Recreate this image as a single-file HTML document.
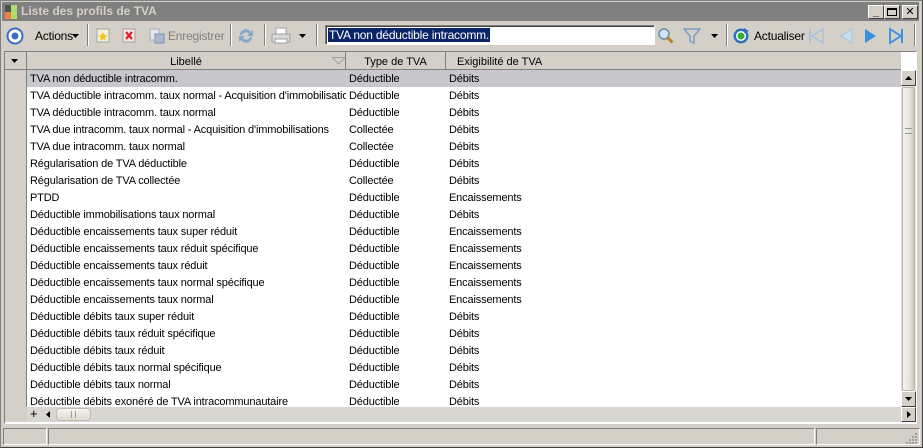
<!DOCTYPE html>
<html><head><meta charset="utf-8"><style>
*{box-sizing:border-box;margin:0;padding:0}
body{width:923px;height:448px;background:#d4d0c8;font-family:"Liberation Sans","DejaVu Sans",sans-serif;font-size:11px;color:#000;position:relative;overflow:hidden}
.abs{position:absolute}
#win{left:0;top:0;width:923px;height:448px;border:1px solid #808080;border-right-color:#404040;border-bottom-color:#404040;background:#d4d0c8}
#title{left:2px;top:2px;width:917px;height:19px;background:#808080;color:#d4d0c8;font-weight:bold;font-size:12px}
.tb{width:16px;height:14px;background:#d4d0c8;border:1px solid;border-color:#fff #404040 #404040 #fff;top:3px;font-size:11px;text-align:center;line-height:12px;font-weight:bold;color:#000}
.sep{width:2px;height:22px;border-left:1px solid #808080;border-right:1px solid #fff;top:24px}
.t{top:29px;font-size:12px;letter-spacing:-0.2px}
#grid{left:4px;top:51px;width:913px;height:373px;border:1px solid #808080;border-right-color:#fff;border-bottom-color:#fff;background:#fff}
.hdr{top:52px;height:18px;background:#d4d0c8;border-right:1px solid #808080;border-bottom:1px solid #808080;line-height:19px;font-size:11px;padding-top:1px}
.row{position:absolute;left:27px;width:874px;height:17px;line-height:18px;white-space:nowrap;overflow:hidden}
.row span{position:absolute;top:0;overflow:hidden;white-space:nowrap;letter-spacing:-0.15px}
.c1{left:3px;width:316px}.c2{left:322px}.c3{left:422px}
.btn{background:#d4d0c8;border:1px solid;border-color:#fff #404040 #404040 #fff}
.sb{top:428px;height:17px;border:1px solid;border-color:#808080 #fff #fff #808080}
</style></head><body>
<div id="win" class="abs"></div>
<div id="title" class="abs">
 <div class="abs" style="left:3px;top:3px;width:6px;height:14px;background:#505050"></div>
 <div class="abs" style="left:3px;top:10px;width:6px;height:7px;background:#f08040"></div>
 <div class="abs" style="left:9px;top:3px;width:6px;height:14px;background:#a8e070"></div>
 <div class="abs" style="left:19px;top:2px;line-height:15px">Liste des profils de TVA</div>
 <div class="abs tb" style="left:866px">_</div>
 <div class="abs tb" style="left:882px"><div style="margin:2px auto;width:10px;height:8px;border:1px solid #000;border-top-width:2px"></div></div>
 <div class="abs tb" style="left:900px;line-height:13px">✕</div>
</div>
<svg class="abs" style="left:6px;top:27px" width="18" height="18"><circle cx="9" cy="9" r="7.5" fill="#fff" stroke="#3a6fc8" stroke-width="2"/><circle cx="9" cy="9" r="3.5" fill="#3a6fc8"/></svg>
<div class="abs t" style="left:35px">Actions</div>
<svg class="abs" style="left:72px;top:34px" width="8" height="5"><path d="M0 0H7L3.5 4Z" fill="#000"/></svg>
<div class="abs sep" style="left:87px"></div>
<svg class="abs" style="left:96px;top:28px" width="14" height="15"><rect x="1" y="1" width="12" height="13" fill="#f4f0d8" stroke="#9aa"/><path d="M7 4l1.5 3 3 .5-2.3 2 .6 3L7 11l-2.8 1.5.6-3-2.3-2 3-.5z" fill="#f0c020"/></svg>
<svg class="abs" style="left:122px;top:28px" width="14" height="15"><rect x="1" y="1" width="12" height="13" fill="#f4e8e8" stroke="#a99"/><path d="M4 4l6 7M10 4l-6 7" stroke="#e02020" stroke-width="2.2"/></svg>
<svg class="abs" style="left:149px;top:28px" width="16" height="16"><rect x="1" y="1" width="9" height="11" fill="#e0e4ec" stroke="#a8b0c0"/><rect x="6" y="6" width="9" height="9" fill="#a8b8d0" stroke="#8090b0"/></svg>
<div class="abs t" style="left:168px;color:#808080">Enregistrer</div>
<div class="abs sep" style="left:230px"></div>
<svg class="abs" style="left:236px;top:26px" width="20" height="20"><path d="M4 9a6 6 0 0 1 11-3l2-2v6h-6l2-2a4 4 0 0 0-7 1z" fill="#80a8c8"/><path d="M16 11a6 6 0 0 1-11 3l-2 2v-6h6l-2 2a4 4 0 0 0 7-1z" fill="#80a8c8"/></svg>
<div class="abs sep" style="left:264px"></div>
<svg class="abs" style="left:271px;top:27px" width="20" height="18"><rect x="5" y="1" width="10" height="6" fill="#fff" stroke="#a0a0a0"/><rect x="1" y="7" width="18" height="8" rx="1" fill="#d8d8d8" stroke="#a0a0a0"/><rect x="4" y="12" width="12" height="4" fill="#fff" stroke="#a0a0a0"/></svg>
<svg class="abs" style="left:299px;top:34px" width="8" height="5"><path d="M0 0H7L3.5 4Z" fill="#000"/></svg>
<div class="abs sep" style="left:316px"></div>
<div class="abs" style="left:325px;top:25px;width:330px;height:20px;background:#fff;border:1px solid;border-color:#808080 #fff #fff #808080;box-shadow:inset 1px 1px 0 #404040"></div>
<div class="abs" style="left:328px;top:28px;height:14px;background:#0a246a;color:#fff;font-size:12px;line-height:14px;padding:0 1px;letter-spacing:-0.2px">TVA non déductible intracomm.</div>
<svg class="abs" style="left:656px;top:26px" width="20" height="20"><circle cx="8" cy="8" r="5" fill="#cfe4f8" stroke="#6a8aa8" stroke-width="1.5"/><path d="M11.5 11.5l5 5" stroke="#c08020" stroke-width="3"/></svg>
<svg class="abs" style="left:683px;top:27px" width="18" height="18"><path d="M1 2h16l-6 7v7l-4-2v-5z" fill="none" stroke="#7aa0c8" stroke-width="1.5"/></svg>
<svg class="abs" style="left:711px;top:34px" width="8" height="5"><path d="M0 0H7L3.5 4Z" fill="#000"/></svg>
<div class="abs sep" style="left:726px"></div>
<svg class="abs" style="left:732px;top:27px" width="18" height="18"><circle cx="9" cy="9" r="7.5" fill="#3070c0"/><circle cx="9" cy="9" r="5" fill="#fff"/><circle cx="9" cy="9" r="3.5" fill="#30b030"/><path d="M12 1l5 3-5 2z" fill="#3070c0"/></svg>
<div class="abs t" style="left:754px">Actualiser</div>
<svg class="abs" style="left:808px;top:27px" width="110" height="18"><path d="M2 2v14" stroke="#a8c4e0" stroke-width="2"/><path d="M15 2v14L4 9z" fill="none" stroke="#a8c4e0" stroke-width="1.5"/><path d="M44 2v14L33 9z" fill="#c8dcf0" stroke="#a8c4e0"/><path d="M57 2v14l11-7z" fill="#3a90e0"/><path d="M82 2v14l11-7z" fill="none" stroke="#3a90e0" stroke-width="1.8"/><path d="M94 2v14" stroke="#3a90e0" stroke-width="2"/></svg>
<div class="abs sep" style="left:914px"></div>
<div id="grid" class="abs"></div>
<div class="abs hdr" style="left:5px;width:22px;"><svg style="position:absolute;left:6px;top:7px" width="8" height="5"><path d="M0 0H7L3.5 4Z" fill="#000"/></svg></div>
<div class="abs" style="left:5px;top:70px;width:22px;height:337px;background:#d4d0c8;border-right:1px solid #808080"></div>
<div class="abs hdr" style="left:27px;width:319px;text-align:center">Libellé<svg style="position:absolute;left:305px;top:5px" width="14" height="8"><path d="M0.5 0.5H13L6.7 7Z" fill="none" stroke="#a0a0a0"/></svg></div>
<div class="abs hdr" style="left:346px;width:100px;text-align:center">Type de TVA</div>
<div class="abs hdr" style="left:446px;width:455px;padding-left:11px;border-right:none">Exigibilité de TVA</div>
<div class="abs" style="left:27px;top:70px;width:874px;height:17px;background:#c8c8cc"></div>
<div class="abs" style="left:27px;top:70px;width:874px;height:337px;">
<div class="row" style="left:0;top:0"><span class="c1">TVA non déductible intracomm.</span><span class="c2">Déductible</span><span class="c3">Débits</span></div>
<div class="row" style="left:0;top:17px"><span class="c1">TVA déductible intracomm. taux normal - Acquisition d'immobilisations</span><span class="c2">Déductible</span><span class="c3">Débits</span></div>
<div class="row" style="left:0;top:34px"><span class="c1">TVA déductible intracomm. taux normal</span><span class="c2">Déductible</span><span class="c3">Débits</span></div>
<div class="row" style="left:0;top:51px"><span class="c1">TVA due intracomm. taux normal - Acquisition d'immobilisations</span><span class="c2">Collectée</span><span class="c3">Débits</span></div>
<div class="row" style="left:0;top:68px"><span class="c1">TVA due intracomm. taux normal</span><span class="c2">Collectée</span><span class="c3">Débits</span></div>
<div class="row" style="left:0;top:85px"><span class="c1">Régularisation de TVA déductible</span><span class="c2">Déductible</span><span class="c3">Débits</span></div>
<div class="row" style="left:0;top:102px"><span class="c1">Régularisation de TVA collectée</span><span class="c2">Collectée</span><span class="c3">Débits</span></div>
<div class="row" style="left:0;top:119px"><span class="c1">PTDD</span><span class="c2">Déductible</span><span class="c3">Encaissements</span></div>
<div class="row" style="left:0;top:136px"><span class="c1">Déductible immobilisations taux normal</span><span class="c2">Déductible</span><span class="c3">Débits</span></div>
<div class="row" style="left:0;top:153px"><span class="c1">Déductible encaissements taux super réduit</span><span class="c2">Déductible</span><span class="c3">Encaissements</span></div>
<div class="row" style="left:0;top:170px"><span class="c1">Déductible encaissements taux réduit spécifique</span><span class="c2">Déductible</span><span class="c3">Encaissements</span></div>
<div class="row" style="left:0;top:187px"><span class="c1">Déductible encaissements taux réduit</span><span class="c2">Déductible</span><span class="c3">Encaissements</span></div>
<div class="row" style="left:0;top:204px"><span class="c1">Déductible encaissements taux normal spécifique</span><span class="c2">Déductible</span><span class="c3">Encaissements</span></div>
<div class="row" style="left:0;top:221px"><span class="c1">Déductible encaissements taux normal</span><span class="c2">Déductible</span><span class="c3">Encaissements</span></div>
<div class="row" style="left:0;top:238px"><span class="c1">Déductible débits taux super réduit</span><span class="c2">Déductible</span><span class="c3">Débits</span></div>
<div class="row" style="left:0;top:255px"><span class="c1">Déductible débits taux réduit spécifique</span><span class="c2">Déductible</span><span class="c3">Débits</span></div>
<div class="row" style="left:0;top:272px"><span class="c1">Déductible débits taux réduit</span><span class="c2">Déductible</span><span class="c3">Débits</span></div>
<div class="row" style="left:0;top:289px"><span class="c1">Déductible débits taux normal spécifique</span><span class="c2">Déductible</span><span class="c3">Débits</span></div>
<div class="row" style="left:0;top:306px"><span class="c1">Déductible débits taux normal</span><span class="c2">Déductible</span><span class="c3">Débits</span></div>
<div class="row" style="left:0;top:323px"><span class="c1">Déductible débits exonéré de TVA intracommunautaire</span><span class="c2">Déductible</span><span class="c3">Débits</span></div>
</div>
<div class="abs" style="left:901px;top:70px;width:15px;height:337px;background:#e8e6e0"></div>
<div class="abs btn" style="left:901px;top:70px;width:15px;height:16px"><svg style="position:absolute;left:3px;top:5px" width="8" height="5"><path d="M0 4H7L3.5 0Z" fill="#000"/></svg></div>
<div class="abs" style="left:902px;top:87px;width:13px;height:304px;background:linear-gradient(90deg,#f4f3ee,#e6e4dc 60%,#c8c4b8);border:1px solid #b8b4a8;border-radius:2px"><div style="position:absolute;left:2px;top:40px;width:7px;height:6px;border-top:1px solid #999;border-bottom:1px solid #999"></div></div>
<div class="abs btn" style="left:901px;top:391px;width:15px;height:16px"><svg style="position:absolute;left:3px;top:5px" width="8" height="5"><path d="M0 0H7L3.5 4Z" fill="#000"/></svg></div>
<div class="abs" style="left:5px;top:407px;width:911px;height:15px;background:#d4d0c8"></div>
<div class="abs" style="left:27px;top:407px;width:874px;height:15px;background:#d8d6d0"></div>
<div class="abs" style="left:30px;top:406px;font-size:13px;line-height:15px">+</div>
<svg class="abs" style="left:46px;top:411px" width="6" height="8"><path d="M4 0V7L0 3.5Z" fill="#000"/></svg>
<div class="abs" style="left:56px;top:408px;width:35px;height:13px;background:linear-gradient(#f4f3ee,#dcdad2);border:1px solid #c0bcb0;border-radius:4px"><div style="position:absolute;left:14px;top:2px;width:5px;height:7px;border-left:1px solid #999;border-right:1px solid #999"></div></div>
<div class="abs btn" style="left:901px;top:407px;width:15px;height:15px"><svg style="position:absolute;left:5px;top:3px" width="5" height="8"><path d="M0 0V7L4 3.5Z" fill="#000"/></svg></div>
<div class="abs sb" style="left:3px;width:44px"></div>
<div class="abs sb" style="left:48px;width:767px"></div>
<div class="abs sb" style="left:816px;width:104px"></div>
<svg class="abs" style="left:906px;top:432px" width="12" height="12"><g fill="#a0a0a0"><rect x="9" y="1" width="2" height="2"/><rect x="6" y="4" width="2" height="2"/><rect x="9" y="4" width="2" height="2"/><rect x="3" y="7" width="2" height="2"/><rect x="6" y="7" width="2" height="2"/><rect x="9" y="7" width="2" height="2"/><rect x="0" y="10" width="2" height="2"/><rect x="3" y="10" width="2" height="2"/><rect x="6" y="10" width="2" height="2"/><rect x="9" y="10" width="2" height="2"/></g></svg>
</body></html>
